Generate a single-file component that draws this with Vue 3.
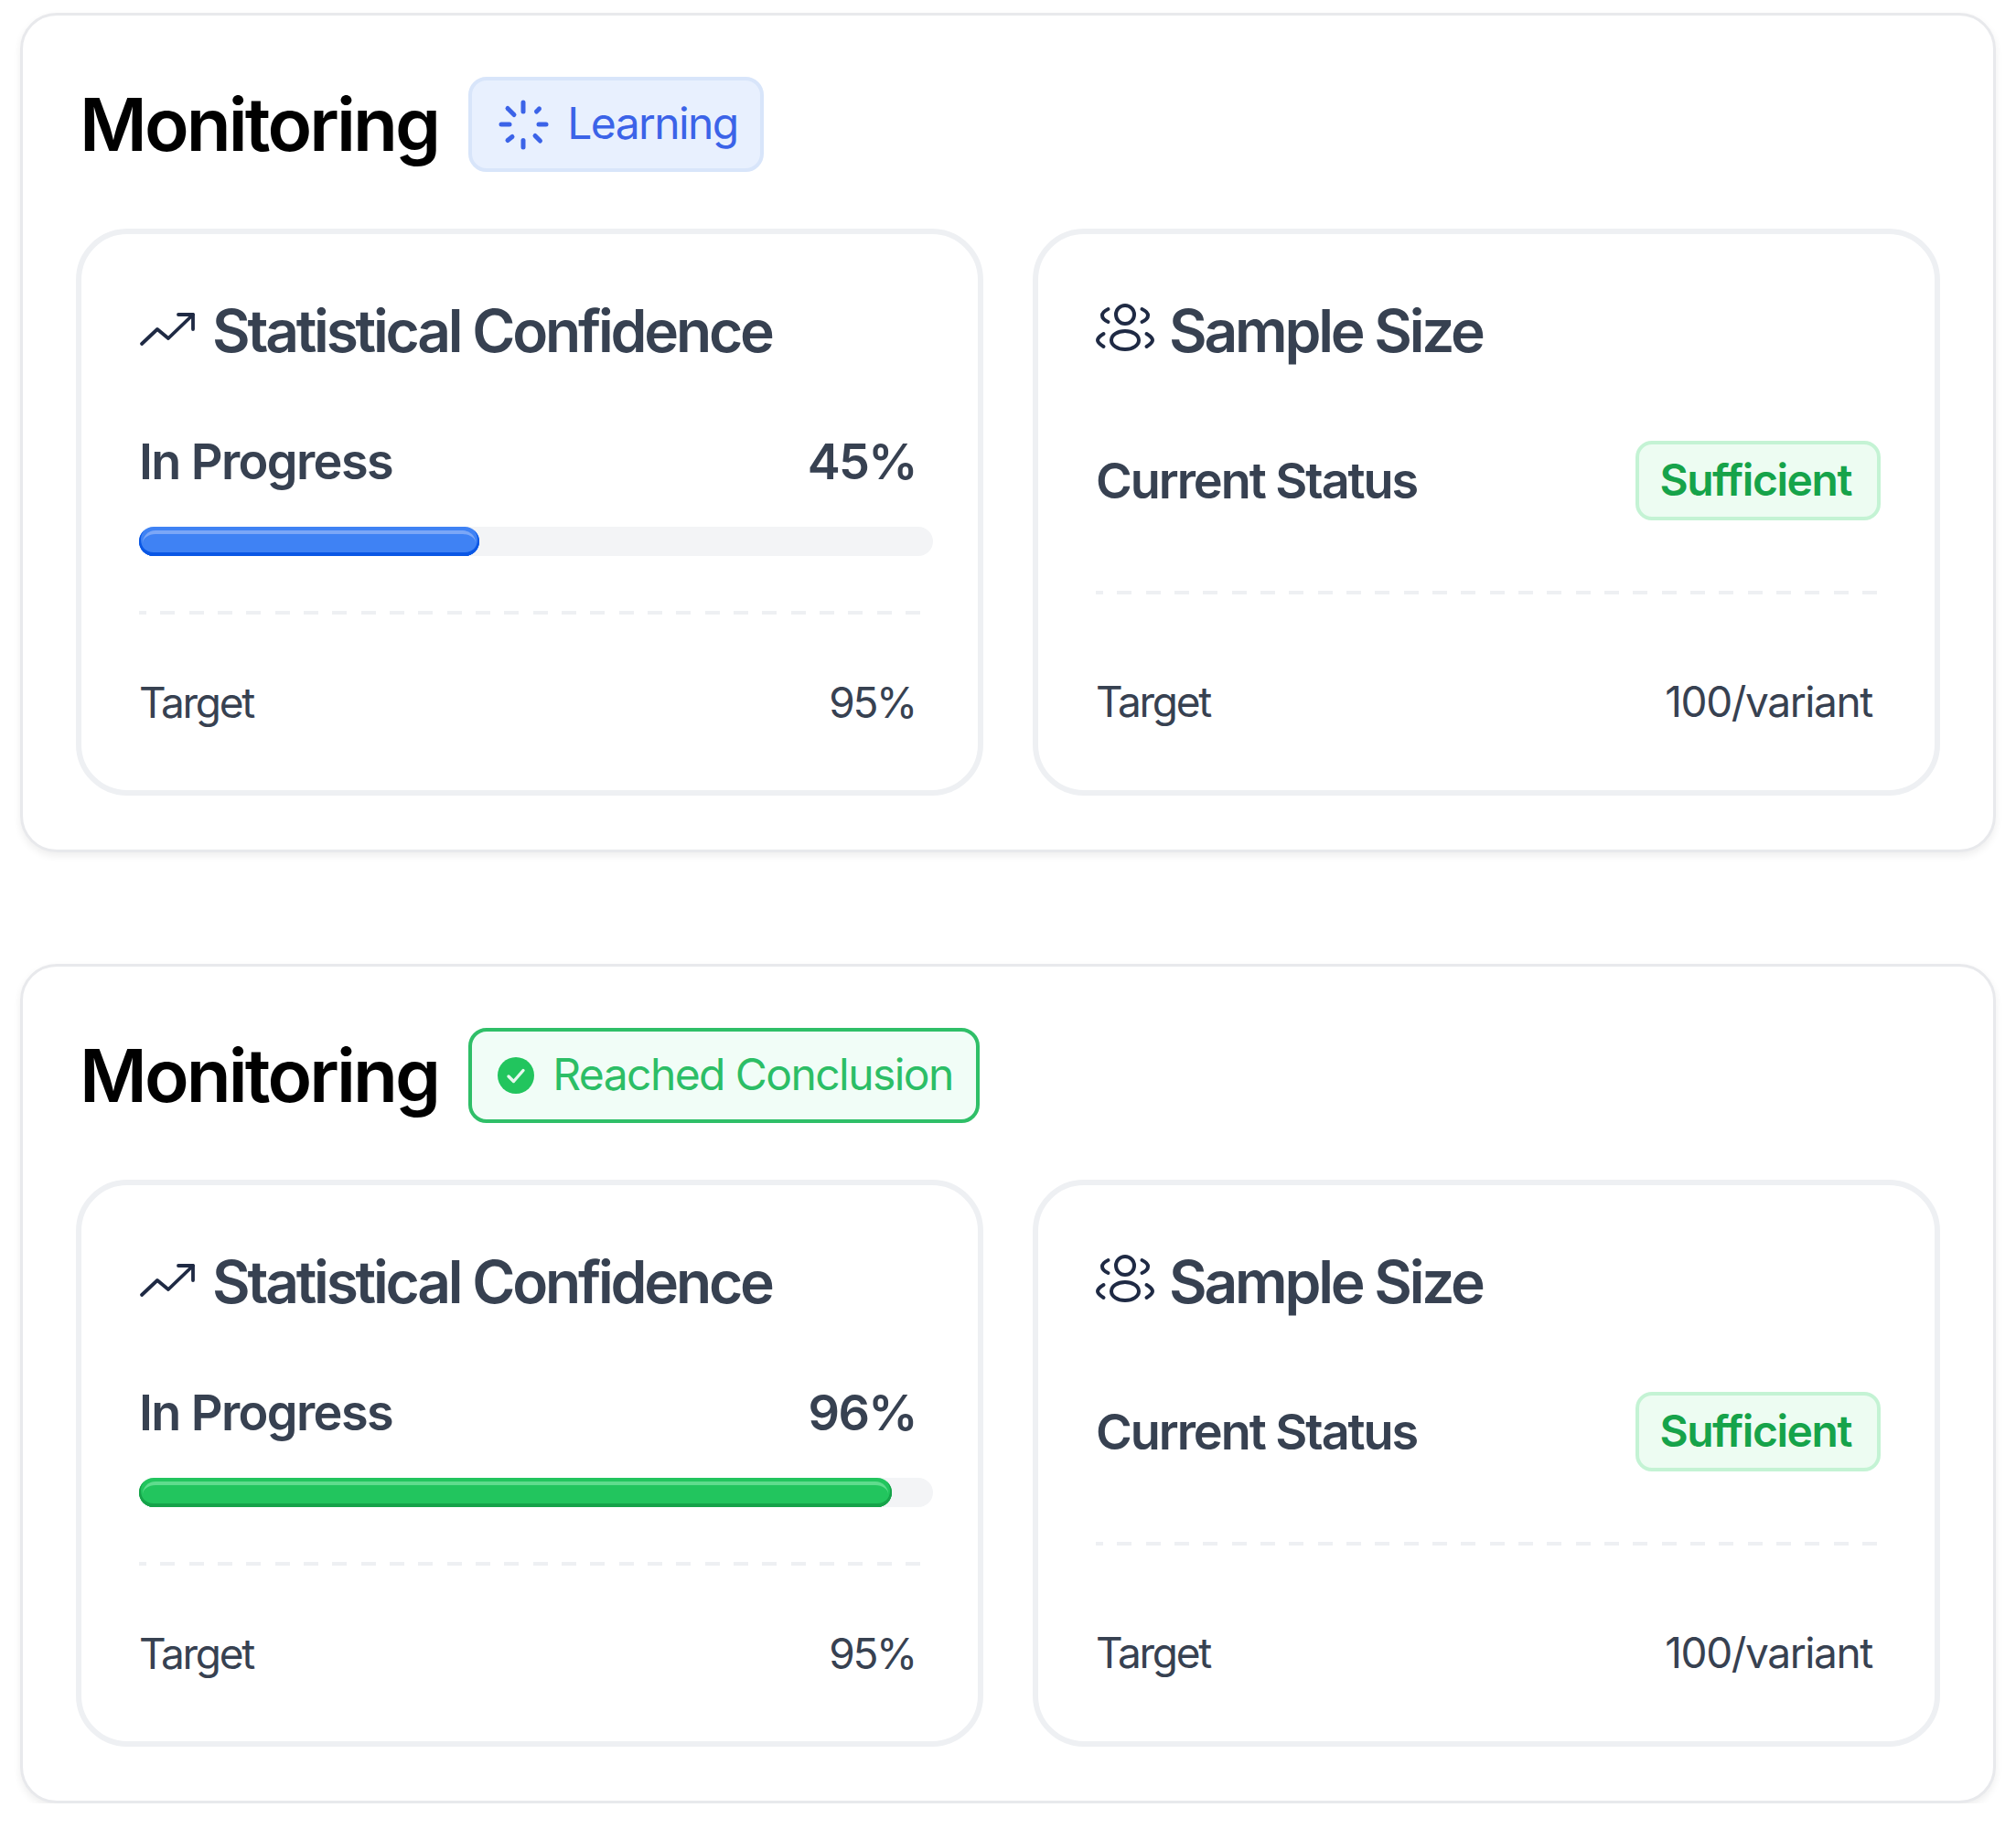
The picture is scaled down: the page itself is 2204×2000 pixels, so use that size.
<template>
  <div class="page">
    <section v-for="item in items" :key="item.id" class="panel">
      <header class="panel-head">
        <h2 class="panel-title">Monitoring</h2>
        <span v-if="item.state === 'learning'" class="state state-learning">
          <svg class="spinner" width="56" height="56" viewBox="-28 -28 56 56" fill="none" stroke="#3b63e8" stroke-width="5" stroke-linecap="round">
            <path d="M0 -24V-14" />
            <path d="M17.500 -17L14.500 -14" />
            <path d="M17 0H25" />
            <path d="M13 12.500L18.500 18" />
            <path d="M0 17.500V25" />
            <path d="M-12 13.500L-17 17.500" />
            <path d="M-24 0H-15" />
            <path d="M-17 -17.500L-10 -10.500" />
          </svg>
          <span class="state-text">Learning</span>
        </span>
        <span v-else class="state state-done">
          <svg class="check" width="40" height="40" viewBox="0 0 40 40" fill="none">
            <circle cx="20" cy="20" r="20" fill="#22c55e" />
            <path d="M12 21L17.500 26.500L28 14.500" stroke="#e6f9ee" stroke-width="3.400" stroke-linecap="round" stroke-linejoin="round" />
          </svg>
          <span class="state-text">Reached Conclusion</span>
        </span>
      </header>

      <div class="cards">
        <div class="card">
          <div class="card-title">
            <svg class="icon-trend" width="64" height="44" viewBox="0 0 64 44" fill="none" stroke="#1f2a44" stroke-width="3.800" stroke-linecap="round" stroke-linejoin="round">
              <path d="M3 37L20 21L32 31L59 5" />
              <path d="M43 5H59V21" />
            </svg>
            Statistical Confidence
          </div>
          <div class="progress-row">
            <span>In Progress</span>
            <span>{{ item.confidence }}%</span>
          </div>
          <div class="track">
            <div class="fill" :class="item.state === 'learning' ? 'fill-blue' : 'fill-green'" :style="{ width: item.fill + 'px' }"></div>
          </div>
          <div class="dashes dashes-left"></div>
          <div class="target-row target-left">
            <span>Target</span>
            <span>95%</span>
          </div>
        </div>

        <div class="card">
          <div class="card-title">
            <svg class="icon-users" width="64" height="58" viewBox="0 0 64 58" fill="none" stroke="#1f2a44" stroke-width="4" stroke-linecap="round" stroke-linejoin="round">
              <ellipse cx="32" cy="12" rx="10" ry="10" />
              <ellipse cx="32" cy="40" rx="15" ry="10" />
              <path d="M13.500 6Q7 9 7 13Q7 17 13.500 20" />
              <path d="M50.500 6Q57 9 57 13Q57 17 50.500 20" />
              <path d="M8.500 33Q2 37 2 40Q2 43 8.500 47" />
              <path d="M55.500 33Q62 37 62 40Q62 43 55.500 47" />
            </svg>
            Sample Size
          </div>
          <div class="status-row">
            <span>Current Status</span>
            <span class="sufficient">Sufficient</span>
          </div>
          <div class="dashes dashes-right"></div>
          <div class="target-row target-right">
            <span>Target</span>
            <span class="target-variant">100/variant</span>
          </div>
        </div>
      </div>
    </section>
  </div>
</template>

<script setup>
const items = [
  { id: 1, state: 'learning', confidence: 45, fill: 372 },
  { id: 2, state: 'done', confidence: 96, fill: 823 }
]
</script>

<style>
html,
body {
  background: #ffffff;
}
</style>

<style scoped>
.page {
  display: flex;
  flex-direction: column;
  gap: 122px;
  padding: 14px 22px 0;
  font-family: Inter, "Liberation Sans", sans-serif;
}

.panel {
  background: #ffffff;
  border: 3px solid #e8e9ec;
  border-radius: 40px;
  padding: 67px 58px 59px;
  box-shadow: 0 4px 8px rgba(0, 0, 0, 0.07);
}

.panel-head {
  display: flex;
  align-items: center;
  gap: 33px;
  height: 104px;
  margin-bottom: 62px;
}

.panel-title {
  margin: 0 0 0 4px;
  font-size: 80px;
  line-height: 104px;
  font-weight: 600;
  letter-spacing: -0.036em;
  color: #000000;
}

.state {
  display: flex;
  align-items: center;
  box-sizing: border-box;
  height: 104px;
  border-radius: 20px;
  font-size: 48px;
  font-weight: 400;
  letter-spacing: -0.033em;
}

.state-text {
  margin-bottom: 3px;
}

.state-learning {
  gap: 20px;
  width: 323px;
  padding-left: 28px;
  background: #e8f0fe;
  border: 4px solid #d8e5fa;
  color: #3b63e8;
}

.state-done {
  gap: 20px;
  width: 559px;
  padding-left: 28px;
  background: #f1fdf7;
  border: 4px solid #2fbf68;
  color: #2cbe66;
}

.spinner,
.check {
  flex: none;
}

.cards {
  display: grid;
  grid-template-columns: 1fr 1fr;
  gap: 54px;
}

.card {
  background: #ffffff;
  border: 6px solid #eef0f3;
  border-radius: 56px;
  padding: 73px 63px 68px;
  color: #374151;
}

.card-title {
  display: flex;
  align-items: center;
  gap: 16px;
  height: 64px;
  font-size: 64px;
  font-weight: 600;
  letter-spacing: -0.05em;
}

.progress-row {
  display: flex;
  justify-content: space-between;
  height: 60px;
  margin-top: 82px;
  padding-right: 4px;
  font-size: 54px;
  line-height: 60px;
  font-weight: 600;
  letter-spacing: -0.03em;
}

.track {
  height: 32px;
  margin: 41px -14px 0 0;
  background: #f3f4f6;
  border-radius: 16px;
}

.fill {
  position: relative;
  box-sizing: border-box;
  height: 32px;
  border-radius: 16px;
}

.fill::before {
  content: '';
  position: absolute;
  top: 4px;
  left: 4px;
  right: 4px;
  height: 16px;
  border-top: 4px solid;
  border-radius: 14px 14px 0 0;
}

.fill-blue {
  background: #3f82f4;
  box-shadow: inset 0 -4px 0 #0a57e5, inset 2px -2px 0 #0a57e5, inset -2px -2px 0 #0a57e5;
}

.fill-blue::before {
  border-color: #7ba7f7;
}

.fill-green {
  background: #22c55e;
  box-shadow: inset 0 -4px 0 #16a34a, inset 2px -2px 0 #16a34a, inset -2px -2px 0 #16a34a;
}

.fill-green::before {
  border-color: #5fdc8d;
}

.dashes {
  height: 4px;
  background: repeating-linear-gradient(90deg, #eef0f3 0 8px, transparent 8px 23.33px, #eef0f3 23.33px 31.33px);
}

.dashes-left {
  margin-top: 60px;
}

.dashes-right {
  margin-top: 77px;
}

.target-row {
  display: flex;
  justify-content: space-between;
  height: 56px;
  padding-right: 5px;
  font-size: 46px;
  line-height: 56px;
  font-weight: 400;
  letter-spacing: -0.05em;
}

.target-left {
  margin-top: 68px;
}

.target-right {
  margin-top: 89px;
}

.target-variant {
  letter-spacing: -0.03em;
}

.status-row {
  display: flex;
  justify-content: space-between;
  align-items: center;
  height: 87px;
  margin-top: 89px;
  font-size: 54px;
  font-weight: 600;
  letter-spacing: -0.038em;
}

.sufficient {
  display: flex;
  align-items: center;
  box-sizing: border-box;
  height: 87px;
  padding: 0 28px 2px 22px;
  margin-right: -4px;
  background: #edfcf2;
  border: 4px solid #c4f3d4;
  border-radius: 18px;
  color: #16a34a;
  font-size: 48px;
  font-weight: 600;
  letter-spacing: -0.03em;
}
</style>
